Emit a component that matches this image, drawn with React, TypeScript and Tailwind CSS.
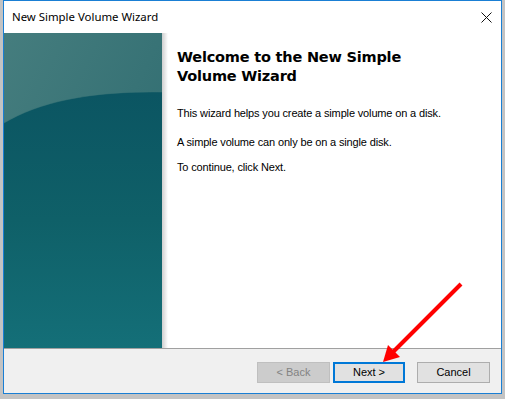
import React from 'react';

const sans = { fontFamily: '"Liberation Sans", Arial, sans-serif' };

// left art panel of the wizard (the teal picture)
const WizardArt: React.FC = () => (
  <svg width="158" height="315" viewBox="0 0 158 315" className="block">
    <defs>
      <linearGradient id="topGrad" x1="0" y1="0" x2="1" y2="1">
        <stop offset="0" stopColor="#457d7e" />
        <stop offset="1" stopColor="#2b696e" />
      </linearGradient>
      <linearGradient id="lowGrad" x1="0" y1="0" x2="0" y2="1">
        <stop offset="0" stopColor="#0b5562" />
        <stop offset="0.5" stopColor="#0f6068" />
        <stop offset="1" stopColor="#146f78" />
      </linearGradient>
    </defs>
    <rect width="158" height="315" fill="url(#topGrad)" />
    <path d="M0,90 C35,69 85,58 158,59 L158,315 L0,315 Z" fill="url(#lowGrad)" />
    <path d="M0,90 C35,69 85,58 158,59" fill="none" stroke="#3d7578" strokeWidth="0.8" opacity="0.6" />
  </svg>
);

export default function App() {
  return (
    <div className="relative w-[505px] h-[399px] bg-[#c3c3c3] overflow-hidden">
      {/* window */}
      <div className="ml-[3px] w-[499px] h-[394px] border border-[#1a7fd4] bg-white flex flex-col">
        {/* title bar */}
        <div className="h-[32px] flex items-center justify-between pl-[8px] pr-[9px] bg-white">
          <span className="text-[11.4px] text-black" style={{ fontFamily: '"Noto Sans", "Open Sans", sans-serif' }}>
            New Simple Volume Wizard
          </span>
          <svg width="11" height="11" viewBox="0 0 11 11">
            <path d="M0.5,0.5 L10.5,10.5 M10.5,0.5 L0.5,10.5" stroke="#111" strokeWidth="1" />
          </svg>
        </div>

        {/* body */}
        <div className="h-[315px] flex">
          <WizardArt />
          <div className="w-[6px] h-full bg-gradient-to-r from-[#cfcfcf] to-white" />
          <div className="flex-1 pl-[9px] pt-[15px] text-black">
            <h1
              className="text-[14.5px] leading-[19px] font-bold text-black tracking-[-0.2px]"
              style={{ fontFamily: '"DejaVu Sans", Verdana, sans-serif' }}
            >
              Welcome to the New Simple<br />Volume Wizard
            </h1>
            <div className="text-[11px] tracking-[-0.15px] leading-[13px]" style={sans}>
              <p className="mt-[21px]">This wizard helps you create a simple volume on a disk.</p>
              <p className="mt-[16px]">A simple volume can only be on a single disk.</p>
              <p className="mt-[12px]">To continue, click Next.</p>
            </div>
          </div>
        </div>

        <div className="h-px bg-[#a0a0a0]" />

        {/* footer buttons */}
        <div className="flex-1 bg-[#f0f0f0] flex items-start justify-end pt-[13px] pr-[11px] text-[11px]" style={sans}>
          <button className="w-[73px] h-[21px] border border-[#bfbfbf] bg-[#cccccc] text-[#838383]">
            &lt; Back
          </button>
          <button className="ml-[3px] w-[72px] h-[21px] border-2 border-[#0078d7] bg-[#e1e1e1] text-black">
            Next &gt;
          </button>
          <button className="ml-[12px] w-[73px] h-[21px] border border-[#adadad] bg-[#e1e1e1] text-black">
            Cancel
          </button>
        </div>
      </div>

      {/* red annotation arrow */}
      <svg className="absolute left-0 top-0 pointer-events-none" width="505" height="399" viewBox="0 0 505 399">
        <line x1="461" y1="284" x2="393" y2="352" stroke="#ff0000" strokeWidth="4" />
        <polygon points="383,362 400,357 388,345" fill="#ff0000" />
      </svg>
    </div>
  );
}
